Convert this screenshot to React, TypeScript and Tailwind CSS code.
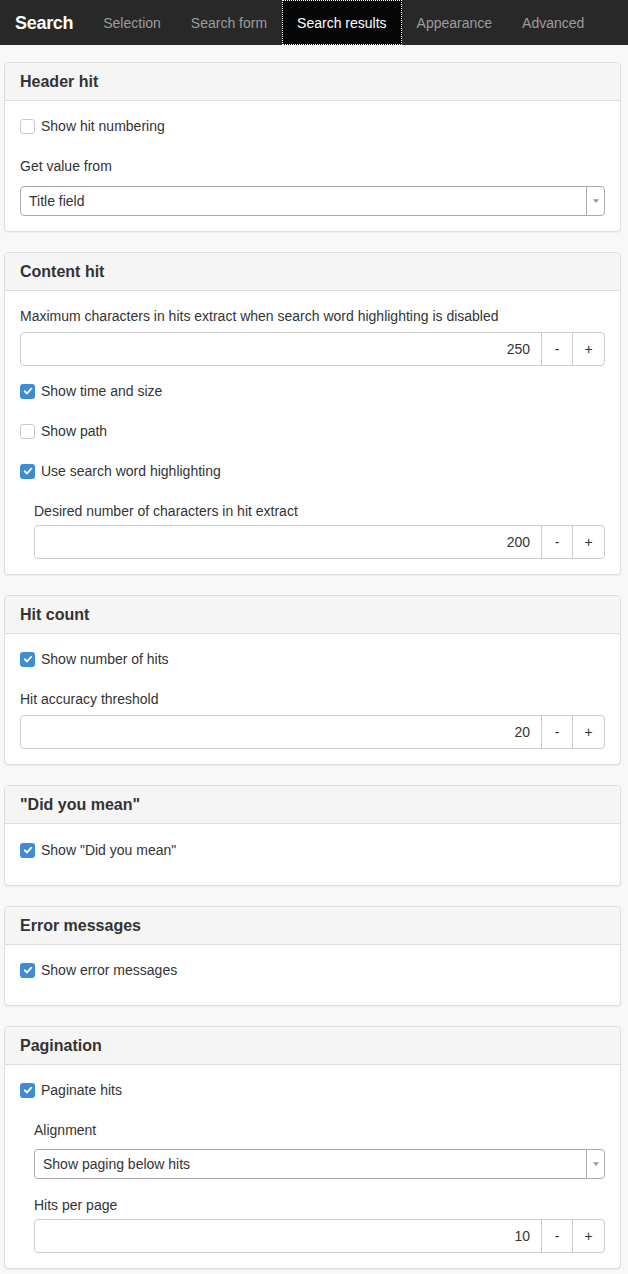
import type { ReactNode } from "react";

const tabs = ["Selection", "Search form", "Search results", "Appearance", "Advanced"];

function Checkbox({ label, checked }: { label: string; checked?: boolean }) {
  return (
    <div className="flex h-5 items-center gap-[6px]">
      {checked ? (
        <span className="flex size-[15px] items-center justify-center rounded-[3px] bg-[#3f8cd4]">
          <svg viewBox="0 0 12 12" className="size-[10px]">
            <path d="M2 6.3 4.8 9 10 3.2" fill="none" stroke="#fff" strokeWidth="2.2" strokeLinecap="round" strokeLinejoin="round" />
          </svg>
        </span>
      ) : (
        <span className="size-[15px] rounded-[3px] border border-[#c9c9c9] bg-white" />
      )}
      <span>{label}</span>
    </div>
  );
}

function Label({ children }: { children: ReactNode }) {
  return <div className="flex h-5 items-center">{children}</div>;
}

function Spinner({ value }: { value: string }) {
  return (
    <div className="flex h-[34px] overflow-hidden rounded-[4px] border border-[#ccc] bg-white">
      <div className="flex flex-1 items-center justify-end pr-[11px]">{value}</div>
      <div className="flex w-[31px] items-center justify-center border-l border-[#ccc]">-</div>
      <div className="flex w-[32px] items-center justify-center border-l border-[#ccc]">+</div>
    </div>
  );
}

function Select({ value }: { value: string }) {
  return (
    <div className="flex h-[30px] overflow-hidden rounded-[4px] border border-[#aaa] bg-white">
      <div className="flex flex-1 items-center pl-2">{value}</div>
      <div className="flex w-[18px] items-center justify-center border-l border-[#aaa]">
        <svg viewBox="0 0 8 5" className="h-[4px] w-[6px]">
          <path d="M0 0h8L4 5z" fill="#999" />
        </svg>
      </div>
    </div>
  );
}

function Panel({ title, children }: { title: string; children: ReactNode }) {
  return (
    <section className="mb-5 ml-1 mr-[7px] overflow-hidden rounded-[4px] border border-[#ddd] bg-white shadow-[0_1px_1px_rgba(0,0,0,0.05)]">
      <h3 className="flex h-[38px] items-center border-b border-[#ddd] bg-[#f5f5f5] px-[15px] text-base font-bold text-[#333]">
        {title}
      </h3>
      <div className="flex flex-col p-[15px]">{children}</div>
    </section>
  );
}

export default function App() {
  return (
    <div className="min-h-[1274px] bg-[#f8f8f8] text-sm text-[#333] [font-family:'Liberation_Sans',Arial,sans-serif]">
      <nav className="flex h-[45px] items-stretch bg-[#282828]">
        <div className="flex items-center pl-[15px] pr-[15px] text-lg font-bold tracking-[-0.3px] text-white">
          Search
        </div>
        {tabs.map((tab) => (
          <div
            key={tab}
            className={
              tab === "Search results"
                ? "flex items-center bg-[#060606] px-[15px] text-white outline-1 -outline-offset-1 outline-dotted outline-white"
                : "flex items-center px-[15px] text-[#9d9d9d]"
            }
          >
            {tab}
          </div>
        ))}
      </nav>

      <div className="pt-[17px]">
        <Panel title="Header hit">
          <Checkbox label="Show hit numbering" />
          <div className="mt-5">
            <Label>Get value from</Label>
          </div>
          <div className="mt-[10px]">
            <Select value="Title field" />
          </div>
        </Panel>

        <Panel title="Content hit">
          <Label>Maximum characters in hits extract when search word highlighting is disabled</Label>
          <div className="mt-[6px]">
            <Spinner value="250" />
          </div>
          <div className="mt-[15px] flex flex-col gap-5">
            <Checkbox label="Show time and size" checked />
            <Checkbox label="Show path" />
            <Checkbox label="Use search word highlighting" checked />
          </div>
          <div className="mt-5 pl-[14px]">
            <Label>Desired number of characters in hit extract</Label>
            <div className="mt-[4px]">
              <Spinner value="200" />
            </div>
          </div>
        </Panel>

        <Panel title="Hit count">
          <Checkbox label="Show number of hits" checked />
          <div className="mt-5">
            <Label>Hit accuracy threshold</Label>
          </div>
          <div className="mt-[6px]">
            <Spinner value="20" />
          </div>
        </Panel>

        <Panel title={'"Did you mean"'}>
          <div className="mb-[10px] pt-[1px]">
            <Checkbox label={'Show "Did you mean"'} checked />
          </div>
        </Panel>

        <Panel title="Error messages">
          <div className="mb-[10px]">
            <Checkbox label="Show error messages" checked />
          </div>
        </Panel>

        <Panel title="Pagination">
          <Checkbox label="Paginate hits" checked />
          <div className="mt-5 pl-[14px]">
            <Label>Alignment</Label>
            <div className="mt-[9px]">
              <Select value="Show paging below hits" />
            </div>
            <div className="mt-[16px]">
              <Label>Hits per page</Label>
            </div>
            <div className="mt-[4px]">
              <Spinner value="10" />
            </div>
          </div>
        </Panel>
      </div>
    </div>
  );
}
